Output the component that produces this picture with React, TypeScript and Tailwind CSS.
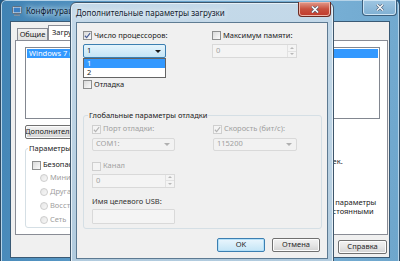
import React from 'react'

const CheckBox = ({ checked = false, disabled = false }: { checked?: boolean; disabled?: boolean }) => (
  <span
    className={`flex h-[9px] w-[9px] shrink-0 items-center justify-center border ${
      disabled
        ? 'border-[#cfcfcf] bg-[#f4f4f4]'
        : 'border-[#8e8f8f] bg-linear-to-br from-[#dadada] to-[#fafafa]'
    }`}
  >
    {checked && (
      <svg viewBox="0 0 8 8" className="h-[7px] w-[7px]">
        <path
          d="M1 4.3 L3 6.4 L7 1.2"
          fill="none"
          stroke={disabled ? '#b4b4b4' : '#4a5f97'}
          strokeWidth="1.3"
        />
      </svg>
    )}
  </span>
)

const Radio = () => (
  <span className="h-[8px] w-[8px] shrink-0 rounded-full border border-[#cdcdcd] bg-linear-to-br from-[#e6e6e6] to-[#f8f8f8]" />
)

const Arrow = ({ color }: { color: string }) => (
  <svg viewBox="0 0 6 3" className="h-[3px] w-[6px]">
    <path d="M0 0 H6 L3 3 Z" fill={color} />
  </svg>
)

const SpinArrows = () => (
  <span className="flex h-full w-[9px] flex-col border-l border-[#e2e2e2]">
    <span className="flex flex-1 items-center justify-center border-b border-[#e2e2e2]">
      <svg viewBox="0 0 4 2" className="h-[2px] w-[4px]">
        <path d="M0 2 H4 L2 0 Z" fill="#b8b8b8" />
      </svg>
    </span>
    <span className="flex flex-1 items-center justify-center">
      <svg viewBox="0 0 4 2" className="h-[2px] w-[4px]">
        <path d="M0 0 H4 L2 2 Z" fill="#b8b8b8" />
      </svg>
    </span>
  </span>
)

const DisabledCombo = ({ value, width }: { value: string; width: string }) => (
  <div
    className={`flex h-[13px] ${width} items-center justify-between rounded-[2px] border border-[#d9d9d9] bg-[#f2f2f2] pl-[3px] pr-[4px] text-[#a0a0a0]`}
  >
    <span>{value}</span>
    <Arrow color="#b0b0b0" />
  </div>
)

const DisabledSpin = ({ width }: { width: string }) => (
  <div
    className={`flex h-[14px] ${width} items-center justify-between border border-[#d9d9d9] bg-[#f4f4f4] pl-[3px] text-[#a0a0a0]`}
  >
    <span>0</span>
    <SpinArrows />
  </div>
)

const Button = ({ label, isDefault = false, width = 'w-[48px]' }: { label: string; isDefault?: boolean; width?: string }) => (
  <div
    className={`flex h-[14px] ${width} items-center justify-center overflow-hidden whitespace-nowrap rounded-[2px] border text-[#1e1e1e] ${
      isDefault
        ? 'border-[#3c7fb1] bg-linear-to-b from-[#eaf6fd] to-[#c4e5f6] shadow-[inset_0_0_0_1px_#b3e0f9]'
        : 'border-[#707070] bg-linear-to-b from-[#f2f2f2] via-[#e6e6e6] to-[#d2d2d2] shadow-[inset_0_0_0_1px_#fcfcfc]'
    }`}
  >
    {label}
  </div>
)

const CloseGlyph = ({ color }: { color: string }) => (
  <svg viewBox="0 0 8 7" className="h-[7px] w-[8px]">
    <path d="M1 0.5 L7 6.5 M7 0.5 L1 6.5" stroke="#4b5d73" strokeWidth="2.6" />
    <path d="M1 0.5 L7 6.5 M7 0.5 L1 6.5" stroke={color} strokeWidth="1.5" />
  </svg>
)

const SysConfigIcon = () => (
  <svg viewBox="0 0 10 10" className="h-[10px] w-[10px]">
    <rect x="0.5" y="0.5" width="9" height="7" rx="0.8" fill="#d8dde3" stroke="#55606c" strokeWidth="0.8" />
    <rect x="1.6" y="1.6" width="6.8" height="4.8" fill="#3a7fc4" />
    <rect x="3.5" y="7.6" width="3" height="1.2" fill="#6b7480" />
    <rect x="2" y="8.8" width="6" height="1" fill="#8a939d" />
  </svg>
)

function BackWindow() {
  return (
    <div className="absolute left-0 top-[-1px] flex h-[264px] w-[400px] flex-col rounded-t-[6px] border border-[#2e4a63] bg-[linear-gradient(100deg,#3f82b3_0%,#5c9bc8_30%,#78b0d6_70%,#6ea6cc_100%)] px-[9px] pb-[4px] shadow-[inset_0_0_0_1px_#b5d3e8]">
      <div className="relative flex h-[21px] shrink-0 items-center gap-[4px] pl-[2px]">
        <SysConfigIcon />
        <span className="text-[8px] text-[#10202e] [text-shadow:0_0_5px_#e8f3fb,0_0_9px_#e8f3fb]">
          Конфигурация системы
        </span>
        <div className="absolute right-[-7px] top-0 flex h-[16px] w-[35px] items-center justify-center rounded-b-[4px] border border-t-0 border-[#3c5f7c] bg-linear-to-b from-[#9fc6e2] to-[#7fb0d3] shadow-[inset_0_0_0_1px_#cfe5f4]">
          <CloseGlyph color="#f4f8fb" />
        </div>
      </div>
      <div className="flex flex-1 flex-col border border-[#3a5a75] bg-[#f0f0f0] pl-[4px] pr-[1px]">
        <div className="flex h-[18px] items-end pl-[2px]">
          <div className="flex h-[12px] w-[31px] items-center justify-center border border-b-0 border-[#898c95] bg-linear-to-b from-[#f2f2f2] to-[#e0e0e0]">
            Общие
          </div>
          <div className="flex h-[15px] items-center border border-b-0 border-[#898c95] bg-white px-[3px]">
            Загрузка
          </div>
        </div>
        <div className="flex h-[195px] flex-col border border-[#898c95] bg-white pl-[9px] pr-[7px] pt-[6px]">
          <div className="h-[72px] border border-[#828790] bg-white p-[1px]">
            <div className="flex h-[9px] items-center whitespace-nowrap bg-[#3399ff] pl-[2px] text-white">
              Windows 7 (C:\Windows) : Текущая ОС; ОС по умолчанию
            </div>
          </div>
          <div className="mt-[6px]">
            <Button label="Дополнительные параметры..." width="w-[112px]" />
          </div>
          <div className="mt-[6px] flex">
            <fieldset className="h-[83px] w-[236px] rounded-[3px] border border-[#d5dfe5] pl-[6px] pt-[8px]">
              <legend className="ml-[-4px] px-[1px]">Параметры загрузки</legend>
              <div className="flex h-[9px] items-center gap-[2px]">
                <CheckBox />
                <span>Безопасный режим</span>
              </div>
              <div className="mt-[4px] flex flex-col gap-[5px] pl-[8px] text-[#a0a0a0]">
                {['Минимальная загрузка', 'Другая оболочка', 'Восстановление Active Directory', 'Сеть'].map(
                  (t) => (
                    <div key={t} className="flex h-[9px] items-center gap-[2px]">
                      <Radio />
                      <span>{t}</span>
                    </div>
                  ),
                )}
              </div>
            </fieldset>
            <div className="ml-[18px] flex flex-col pt-[10px]">
              <div className="ml-[12px] flex items-center gap-[4px]">
                <div className="h-[13px] w-[34px] border border-[#abadb3]" />
                <span>сек.</span>
              </div>
              <div className="mt-[30px] flex items-start gap-[2px]">
                <CheckBox />
                <span className="leading-[9px]">
                  Сделать эти параметры
                  <br />
                  загрузки постоянными
                </span>
              </div>
            </div>
          </div>
        </div>
        <div className="mt-[5px] flex justify-end pr-[1px]">
          <Button label="Справка" width="w-[49px]" />
        </div>
      </div>
    </div>
  )
}

function FrontWindow() {
  return (
    <div className="absolute left-[70px] top-[2px] flex h-[262px] w-[264px] flex-col rounded-t-[6px] border border-[#3e566b] bg-linear-to-b from-[#c4d9e9] via-[#bcd3e4] to-[#b1cbde] px-[5px] pb-[4px] shadow-[inset_0_0_0_1px_#e6f0f7]">
      <div className="relative flex h-[19px] shrink-0 items-center">
        <span className="text-[8px] text-[#14222e] [text-shadow:0_0_5px_#eef5fa,0_0_9px_#eef5fa]">
          Дополнительные параметры загрузки
        </span>
        <div className="absolute right-[-3px] top-[-1px] flex h-[15px] w-[33px] items-center justify-center rounded-b-[4px] border border-t-0 border-[#6b2b22] bg-linear-to-b from-[#e19b8d] via-[#c8513f] to-[#c0392b] shadow-[inset_0_0_0_1px_#efb5a9]">
          <CloseGlyph color="#ffffff" />
        </div>
      </div>
      <div className="flex flex-1 flex-col border border-[#5d7a92] bg-[#f0f0f0] px-[6px] pt-[8px]">
        <div className="flex">
          <div className="flex w-[129px] flex-col">
            <div className="flex h-[9px] items-center gap-[2px]">
              <CheckBox checked />
              <span>Число процессоров:</span>
            </div>
            <div className="relative mt-[4px] w-[83px]">
              <div className="flex h-[14px] items-center justify-between rounded-[2px] border border-[#3c7fb1] bg-linear-to-b from-[#e5f4fc] to-[#c4e5f6] pl-[3px] pr-[4px]">
                <span>1</span>
                <Arrow color="#1a1a1a" />
              </div>
              <div className="absolute left-0 top-full w-[83px] border border-[#646464] bg-white">
                <div className="flex h-[9px] items-center bg-[#3399ff] pl-[3px] text-white">1</div>
                <div className="flex h-[9px] items-center pl-[3px]">2</div>
              </div>
            </div>
          </div>
          <div className="flex flex-col">
            <div className="flex h-[9px] items-center gap-[2px]">
              <CheckBox />
              <span>Максимум памяти:</span>
            </div>
            <div className="mt-[4px]">
              <DisabledSpin width="w-[85px]" />
            </div>
          </div>
        </div>
        <div className="mt-[22px] flex h-[9px] items-center gap-[2px]">
          <CheckBox />
          <span>Отладка</span>
        </div>
        <fieldset className="mt-[23px] h-[117px] w-[239px] rounded-[3px] border border-[#d5dfe5] pl-[8px] pt-[5px]">
          <legend className="ml-[-4px] px-[1px]">Глобальные параметры отладки</legend>
          <div className="flex text-[#a0a0a0]">
            <div className="flex w-[121px] flex-col">
              <div className="flex h-[9px] items-center gap-[2px]">
                <CheckBox checked disabled />
                <span>Порт отладки:</span>
              </div>
              <div className="mt-[4px]">
                <DisabledCombo value="COM1:" width="w-[83px]" />
              </div>
              <div className="mt-[11px] flex h-[9px] items-center gap-[2px]">
                <CheckBox disabled />
                <span>Канал</span>
              </div>
              <div className="mt-[3px]">
                <DisabledSpin width="w-[83px]" />
              </div>
              <span className="mt-[10px] text-[#333]">Имя целевого USB:</span>
              <div className="mt-[4px] h-[15px] w-[83px] rounded-[1px] border border-[#d9d9d9] bg-[#f4f4f4]" />
            </div>
            <div className="flex flex-col">
              <div className="flex h-[9px] items-center gap-[2px]">
                <CheckBox checked disabled />
                <span>Скорость (бит/с):</span>
              </div>
              <div className="mt-[4px]">
                <DisabledCombo value="115200" width="w-[84px]" />
              </div>
            </div>
          </div>
        </fieldset>
        <div className="mt-[9px] flex justify-end gap-[7px] pr-[1px]">
          <Button label="OK" isDefault />
          <Button label="Отмена" />
        </div>
      </div>
    </div>
  )
}

export default function App() {
  return (
    <div className="relative h-[261px] w-[400px] overflow-hidden bg-[#1f5f8f] font-['Noto_Sans',sans-serif] text-[7.5px] leading-none text-[#1a1a1a]">
      <BackWindow />
      <FrontWindow />
    </div>
  )
}
